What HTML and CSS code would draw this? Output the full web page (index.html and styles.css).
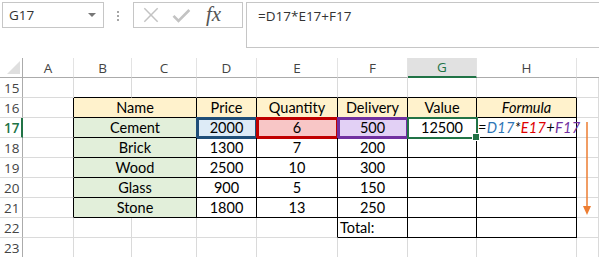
FILE: index.html
```html
<!DOCTYPE html>
<html lang="en">
<head>
    <meta charset="UTF-8">
    <title>Sheet</title>
    <link rel="stylesheet" href="styles.css">
</head>
<body>
    <div class="formula-bar">
        <div class="name-box">
            <span>G17</span>
            <span class="drop"></span>
        </div>
        <div class="grip"><i></i><i></i><i></i></div>
        <div class="fx-buttons">
            <svg class="ico" width="24" height="24" viewBox="0 0 24 24">
                <path d="M4 4 L20 20 M20 4 L4 20" stroke="#c3c3c3" stroke-width="1.8" fill="none"/>
            </svg>
            <svg class="ico" width="24" height="24" viewBox="0 0 24 24">
                <path d="M3 13 L9 19 L22 6" stroke="#c3c3c3" stroke-width="3.2" fill="none"/>
            </svg>
            <span class="fx">fx</span>
        </div>
        <div class="formula-input">=D17*E17+F17</div>
    </div>

    <div class="sheet">
        <!-- column headers -->
        <div class="c corner"><span class="tri"></span></div>
        <div class="c ch">A</div>
        <div class="c ch">B</div>
        <div class="c ch">C</div>
        <div class="c ch">D</div>
        <div class="c ch">E</div>
        <div class="c ch">F</div>
        <div class="c ch active">G</div>
        <div class="c ch">H</div>
        <div class="c ch last"></div>

        <!-- 15 -->
        <div class="c rh">15</div>
        <div class="c"></div>
        <div class="c edge-b"></div>
        <div class="c edge-b"></div>
        <div class="c edge-b"></div>
        <div class="c edge-b"></div>
        <div class="c edge-b"></div>
        <div class="c edge-b"></div>
        <div class="c edge-b"></div>
        <div class="c"></div>

        <!-- 16 -->
        <div class="c rh">16</div>
        <div class="c edge-r"></div>
        <div class="c t head span2">Name</div>
        <div class="c t head">Price</div>
        <div class="c t head">Quantity</div>
        <div class="c t head">Delivery</div>
        <div class="c t head">Value</div>
        <div class="c t head it">Formula</div>
        <div class="c"></div>

        <!-- 17 -->
        <div class="c rh sel">17</div>
        <div class="c edge-r"></div>
        <div class="c t name span2">Cement</div>
        <div class="c t ref-d">2000</div>
        <div class="c t ref-e">6</div>
        <div class="c t ref-f">500</div>
        <div class="c t active-cell">12500</div>
        <div class="c t formula-cell">
            <span>=</span><span class="blue">D17</span><span>*</span><span class="red">E17</span><span>+</span><span class="purple">F17</span>
        </div>
        <div class="c"></div>

        <!-- 18 -->
        <div class="c rh">18</div>
        <div class="c edge-r"></div>
        <div class="c t name span2">Brick</div>
        <div class="c t">1300</div>
        <div class="c t">7</div>
        <div class="c t">200</div>
        <div class="c t"></div>
        <div class="c t"></div>
        <div class="c"></div>

        <!-- 19 -->
        <div class="c rh">19</div>
        <div class="c edge-r"></div>
        <div class="c t name span2">Wood</div>
        <div class="c t">2500</div>
        <div class="c t">10</div>
        <div class="c t">300</div>
        <div class="c t"></div>
        <div class="c t"></div>
        <div class="c"></div>

        <!-- 20 -->
        <div class="c rh">20</div>
        <div class="c edge-r"></div>
        <div class="c t name span2">Glass</div>
        <div class="c t">900</div>
        <div class="c t">5</div>
        <div class="c t">150</div>
        <div class="c t"></div>
        <div class="c t"></div>
        <div class="c"></div>

        <!-- 21 -->
        <div class="c rh">21</div>
        <div class="c edge-r"></div>
        <div class="c t name span2">Stone</div>
        <div class="c t">1800</div>
        <div class="c t">13</div>
        <div class="c t">250</div>
        <div class="c t"></div>
        <div class="c t"></div>
        <div class="c"></div>

        <!-- 22 -->
        <div class="c rh">22</div>
        <div class="c"></div>
        <div class="c"></div>
        <div class="c"></div>
        <div class="c"></div>
        <div class="c edge-r"></div>
        <div class="c t left">Total:</div>
        <div class="c t"></div>
        <div class="c t"></div>
        <div class="c"></div>

        <!-- 23 -->
        <div class="c rh">23</div>
        <div class="c"></div>
        <div class="c"></div>
        <div class="c"></div>
        <div class="c"></div>
        <div class="c"></div>
        <div class="c"></div>
        <div class="c"></div>
        <div class="c"></div>
        <div class="c"></div>

        <svg class="fill-arrow" width="10" height="96" viewBox="0 0 10 96">
            <line x1="5" y1="0" x2="5" y2="88" stroke="#ed7d31" stroke-width="1.5"/>
            <polygon points="1,84 9,84 5,93" fill="#ed7d31"/>
        </svg>
    </div>
</body>
</html>
```

FILE: styles.css
```css
* {
    box-sizing: border-box;
}

body {
    margin: 0;
    width: 599px;
    height: 257px;
    overflow: hidden;
    background: #fff;
    font-family: Lato, "Open Sans", sans-serif;
    color: #000;
}

/* formula bar */
.formula-bar {
    display: flex;
    align-items: flex-start;
    height: 55px;
    padding: 2px 0 0 2px;
}

.name-box {
    width: 102px;
    height: 26px;
    border: 1px solid #c6c6c6;
    display: flex;
    align-items: center;
    justify-content: space-between;
    padding: 0 6px 0 6px;
    font-family: "Open Sans", sans-serif;
    font-size: 13.5px;
    color: #333;
}

.drop {
    width: 0;
    height: 0;
    border-left: 4px solid transparent;
    border-right: 4px solid transparent;
    border-top: 4px solid #777;
    margin-right: 1px;
}

.grip {
    display: flex;
    flex-direction: column;
    gap: 2px;
    margin: 9px 14px 0 13px;
}

.grip i {
    display: block;
    width: 2px;
    height: 2px;
    background: #a6a6a6;
}

.fx-buttons {
    width: 110px;
    height: 26px;
    border: 1px solid #c6c6c6;
    display: flex;
    align-items: center;
    padding-left: 7px;
    gap: 10px;
}

.ico {
    width: 20px;
    height: 20px;
}

.fx {
    font-family: "Liberation Serif", serif;
    font-style: italic;
    font-size: 21px;
    color: #555;
    margin-left: 5px;
    line-height: 1;
    margin-top: -2px;
}

.formula-input {
    flex: 1;
    height: 46px;
    margin-left: 3px;
    border: 1px solid #c6c6c6;
    border-right: none;
    padding: 4px 0 0 11px;
    font-family: "Open Sans", sans-serif;
    font-size: 13.5px;
    color: #333;
}

/* sheet grid */
.sheet {
    position: relative;
    display: grid;
    grid-template-columns: 23px 51px 58px 65px 60px 81px 70px 69px 100px 1fr;
    grid-template-rows: 20px;
    grid-auto-rows: 20px;
    padding-top: 3px;
}

.c {
    border-right: 1px solid #dadada;
    border-bottom: 1px solid #dadada;
    display: flex;
    align-items: center;
    justify-content: center;
    font-size: 14.5px;
    white-space: nowrap;
}

.ch {
    font-family: "Open Sans", sans-serif;
    font-size: 13.5px;
    color: #444;
    border-right-color: #e3e3e3;
    border-bottom-color: #ababab;
}

.ch.active {
    background: #e1e1e1;
    color: #217346;
    border-bottom: 2px solid #217346;
}

.ch.last {
    border-right: none;
}

.corner {
    border-bottom-color: #ababab;
    border-right-color: #ababab;
    position: relative;
}

.tri {
    position: absolute;
    right: 2px;
    bottom: 3px;
    width: 0;
    height: 0;
    border-left: 13px solid transparent;
    border-bottom: 13px solid #dfdfdf;
}

.rh {
    justify-content: flex-start;
    padding-left: 4px;
    font-family: "Open Sans", sans-serif;
    font-size: 13.5px;
    color: #444;
    border-right-color: #ababab;
}

.rh.sel {
    color: #217346;
    font-weight: 600;
    border-right: 2px solid #217346;
}

.edge-b {
    border-bottom-color: #000;
}

.edge-r {
    border-right-color: #000;
}

.t {
    border-right-color: #000;
    border-bottom-color: #000;
}

.span2 {
    grid-column: span 2;
}

.head {
    background: #fff2cc;
}

.it {
    font-style: italic;
}

.name {
    background: #e2efda;
}

.left {
    justify-content: flex-start;
    padding-left: 2px;
}

.ref-d {
    background: #ddebf7;
    outline: 3px solid #1f4e78;
    outline-offset: -2px;
}

.ref-e {
    background: #f8c6c6;
    outline: 3px solid #c00000;
    outline-offset: -2px;
}

.ref-f {
    background: #e2d0f5;
    outline: 3px solid #7030a0;
    outline-offset: -2px;
}

.active-cell {
    position: relative;
    outline: 2px solid #217346;
    outline-offset: -1px;
}

.active-cell::after {
    content: "";
    position: absolute;
    right: -4px;
    bottom: -4px;
    width: 6px;
    height: 6px;
    background: #217346;
    border: 1px solid #fff;
}

.formula-cell {
    font-style: italic;
    justify-content: flex-start;
    padding-left: 1px;
    letter-spacing: 0.3px;
}

.blue {
    color: #2e75b6;
}

.red {
    color: #e00000;
}

.purple {
    color: #7030a0;
}

.fill-arrow {
    position: absolute;
    left: 582px;
    top: 67px;
}
```
